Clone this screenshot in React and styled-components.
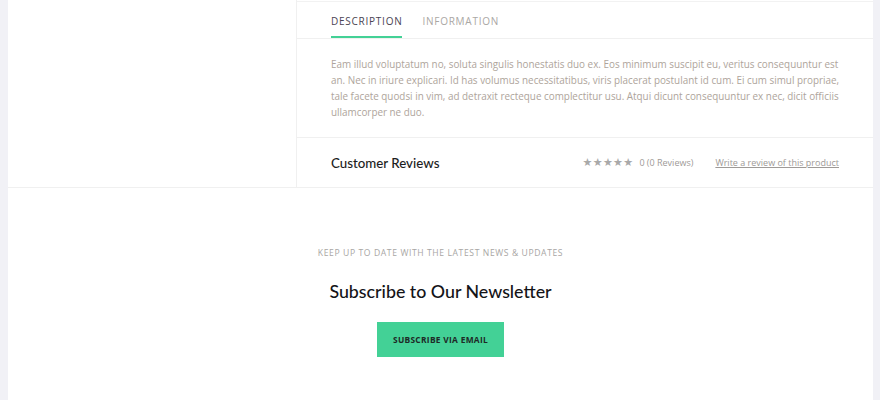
import React, { useState } from 'react';
import styled, { createGlobalStyle } from 'styled-components';

const GlobalStyle = createGlobalStyle`
    body {
        margin: 0;
        background: #f1f1f6;
        font-family: "Open Sans", "Liberation Sans", sans-serif;
    }
`

const Page = styled.div`
    padding: 0 7px 0 8px;
    min-height: 400px;
`

const Panel = styled.div`
    background: #fff;
    min-height: 400px;
`

const Product = styled.section`
    display: grid;
    grid-template-columns: 289px 1fr;
    border-bottom: 1px solid #f0f0f0;
`

const Gallery = styled.div`
    border-right: 1px solid #f0f0f0;
`

const Details = styled.div`
    padding-top: 1px;
`

const TabBar = styled.div`
    display: flex;
    gap: 20px;
    padding: 0 34px;
    border-top: 1px solid #f2f2f2;
    border-bottom: 1px solid #f0f0f0;
`

const Tab = styled.button`
    background: none;
    border: none;
    padding: 11px 0 7px;
    font-family: inherit;
    font-size: 10px;
    line-height: 16px;
    letter-spacing: 0.75px;
    color: ${p => p.active ? '#4a4452' : '#aaa7a4'};
    border-bottom: 2px solid ${p => p.active ? '#43d196' : 'transparent'};
    cursor: pointer;
`

const Description = styled.p`
    margin: 0;
    padding: 17px 33px 17px 34px;
    font-size: 9.9px;
    line-height: 16px;
    color: #aea49b;
    border-bottom: 1px solid #f0f0f0;
`

const ReviewRow = styled.div`
    display: flex;
    align-items: center;
    height: 49px;
    padding: 0 34px;
`

const ReviewTitle = styled.h3`
    margin: 0;
    flex: 1;
    font-family: Lato, "Open Sans", sans-serif;
    font-weight: 500;
    font-size: 13.3px;
    color: #1d1d22;
`

const Stars = styled.span`
    color: #a9a9a9;
    font-family: "DejaVu Sans", sans-serif;
    font-size: 11px;
    letter-spacing: 0.3px;
`

const Count = styled.span`
    margin-left: 6px;
    font-size: 9px;
    color: #9e9a97;
`

const ReviewLink = styled.a`
    margin-left: 22px;
    font-size: 9px;
    color: #9e9a97;
    text-decoration: underline;
`

const Newsletter = styled.section`
    display: flex;
    flex-direction: column;
    align-items: center;
    padding-top: 59px;
`

const Kicker = styled.div`
    font-size: 8.6px;
    letter-spacing: 0.6px;
    color: #a8a6a4;
    line-height: 12px;
`

const Heading = styled.h2`
    margin: 21px 0 0;
    font-family: Lato, "Open Sans", sans-serif;
    font-weight: 500;
    font-size: 17.8px;
    line-height: 22px;
    color: #141418;
`

const SubscribeBtn = styled.button`
    margin-top: 20px;
    width: 127px;
    height: 35px;
    background: #43d196;
    border: none;
    font-family: inherit;
    font-size: 8.4px;
    font-weight: 700;
    letter-spacing: 0.3px;
    color: #1e2a26;
    cursor: pointer;
`

const App = () => {
    const [tab, setTab] = useState('description');
    return (
        <>
            <GlobalStyle />
            <Page>
                <Panel>
                    <Product>
                        <Gallery />
                        <Details>
                            <TabBar>
                                <Tab active={tab === 'description'} onClick={() => setTab('description')}>DESCRIPTION</Tab>
                                <Tab active={tab === 'information'} onClick={() => setTab('information')}>INFORMATION</Tab>
                            </TabBar>
                            <Description>
                                Eam illud voluptatum no, soluta singulis honestatis duo ex. Eos minimum suscipit eu, veritus consequuntur est an. Nec in iriure explicari. Id has volumus necessitatibus, viris placerat postulant id cum. Ei cum simul propriae, tale facete quodsi in vim, ad detraxit recteque complectitur usu. Atqui dicunt consequuntur ex nec, dicit officiis ullamcorper ne duo.
                            </Description>
                            <ReviewRow>
                                <ReviewTitle>Customer Reviews</ReviewTitle>
                                <Stars>★★★★★</Stars>
                                <Count>0 (0 Reviews)</Count>
                                <ReviewLink href="#">Write a review of this product</ReviewLink>
                            </ReviewRow>
                        </Details>
                    </Product>
                    <Newsletter>
                        <Kicker>KEEP UP TO DATE WITH THE LATEST NEWS &amp; UPDATES</Kicker>
                        <Heading>Subscribe to Our Newsletter</Heading>
                        <SubscribeBtn>SUBSCRIBE VIA EMAIL</SubscribeBtn>
                    </Newsletter>
                </Panel>
            </Page>
        </>
    );
};

export default App;
